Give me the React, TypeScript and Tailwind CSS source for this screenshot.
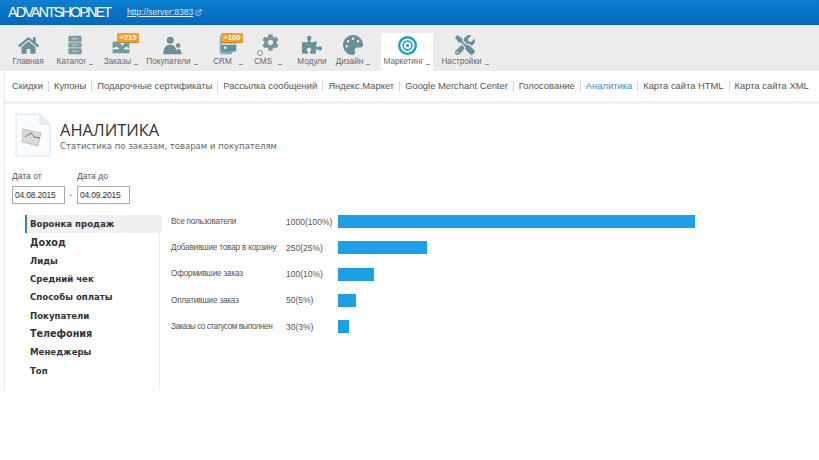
import React from 'react';
import { ExternalLink } from 'lucide-react';
import { FaCog, FaHome, FaPalette, FaPuzzlePiece, FaTools } from 'react-icons/fa';

const Caret = ({ gap = 'ml-[3px]' }: { gap?: string }) => (
  <span className={`inline-block ${gap} w-[4px] h-[1.5px] bg-[#8a9499] align-[-1px]`} />
);

const CatalogIcon = () => (
  <svg viewBox="0 0 24 24" className="w-[20px] h-[22px]">
    <rect x="4" y="1" width="16" height="7" rx="1.500" fill="#7c9a9f" />
    <rect x="4" y="9" width="16" height="6" rx="1" fill="#7c9a9f" />
    <rect x="4" y="16" width="16" height="7" rx="1.500" fill="#7c9a9f" />
    <path stroke="#dfe5e6" d="M8 4.500h8M8 12h8M8 19.500h8" />
  </svg>
);
const OrdersIcon = () => (
  <svg viewBox="0 0 24 24" className="w-[24px] h-[20px]">
    <path fill="#6f9ca3" d="M2 8h7l5 5 3-5h5v14H2z" />
    <path fill="#f3f4f4" d="M2 16l5-2 3 3h5l3-3 4 2v1H2z" />
    <path fill="#4f8087" d="M6 8l6-5 2 2-5 4z" />
  </svg>
);
const CustomersIcon = () => (
  <svg viewBox="0 0 24 24" className="w-[22px] h-[21px]">
    <circle cx="10" cy="6" r="4" fill="#6f8f98" />
    <path fill="#6f8f98" d="M2 22c0-8 3-11 8-11s7 3 7 11z" />
    <circle cx="19" cy="12" r="2.500" fill="#6f8f98" />
    <path fill="#6f8f98" d="M16 22c0-4 1-6 3-6s4 2 4 6z" />
  </svg>
);
const CrmIcon = () => (
  <svg viewBox="0 0 24 24" className="w-[22px] h-[22px]">
    <rect x="3" y="2" width="14" height="20" rx="2" fill="#7fb0b5" />
    <rect x="5" y="8" width="16" height="11" rx="1" fill="#5d949b" />
    <path stroke="#e8eeee" strokeWidth="1.500" d="M5 11h16" />
    <circle cx="9" cy="15" r="1.500" fill="#e8eeee" />
  </svg>
);
const CmsIcon = () => (
  <div className="relative w-[22px] h-[22px]">
    <FaCog className="absolute right-0 top-0 w-[17px] h-[17px] text-[#76959c]" />
    <span className="absolute left-0 bottom-0 w-[6px] h-[6px] rounded-full border border-[#76959c]" />
  </div>
);
const TargetIcon = () => (
  <svg viewBox="0 0 24 24" className="w-[19px] h-[19px]">
    <circle cx="12" cy="12" r="10.500" fill="none" stroke="#1ba0c4" strokeWidth="3" />
    <circle cx="12" cy="12" r="5.500" fill="none" stroke="#1ba0c4" strokeWidth="2" />
    <circle cx="12" cy="12" r="2" fill="#1ba0c4" />
  </svg>
);

const iconClass = 'text-[#67919b]';

const navItems = [
  { label: 'Главная', icon: <FaHome className={`${iconClass} w-[21px] h-[21px]`} />, w: 'w-[44px]' },
  { label: 'Каталог', icon: <CatalogIcon />, caret: true, w: 'w-[50px]' },
  { label: 'Заказы', icon: <OrdersIcon />, caret: true, badge: '+215', badgeLeft: 'left-[17px]', w: 'w-[42px]' },
  { label: 'Покупатели', icon: <CustomersIcon />, caret: true, w: 'w-[60px]' },
  { label: 'CRM', icon: <CrmIcon />, caret: true, gap: 'ml-[7px]', badge: '+100', badgeLeft: 'left-[19px]', w: 'w-[52px]' },
  { label: 'CMS', icon: <CmsIcon />, caret: true, gap: 'ml-[6px]', w: 'w-[28px]' },
  { label: 'Модули', icon: <FaPuzzlePiece className={`${iconClass} w-[20px] h-[20px]`} />, w: 'w-[60px]' },
  { label: 'Дизайн', icon: <FaPalette className={`${iconClass} w-[20px] h-[20px]`} />, caret: true, w: 'w-[22px]' },
];

const subItems = ['Скидки', 'Купоны', 'Подарочные сертификаты', 'Рассылка сообщений', 'Яндекс.Маркет', 'Google Merchant Center', 'Голосование', 'Аналитика', 'Карта сайта HTML', 'Карта сайта XML'];

const sideItems = [
  { label: 'Воронка продаж' },
  { label: 'Доход', large: true },
  { label: 'Лиды' },
  { label: 'Средний чек' },
  { label: 'Способы оплаты' },
  { label: 'Покупатели' },
  { label: 'Телефония', large: true },
  { label: 'Менеджеры' },
  { label: 'Топ' },
];

const funnel = [
  { label: 'Все пользователи', value: '1000(100%)', width: 357 },
  { label: 'Добавившие товар в корзину', value: '250(25%)', width: 89 },
  { label: 'Оформившие заказ', value: '100(10%)', width: 36 },
  { label: 'Оплатившие заказ', value: '50(5%)', width: 18 },
  { label: 'Заказы со статусом выполнен', value: '30(3%)', width: 11, tight: true },
];

export default function App() {
  return (
    <div className="w-[819px] h-[460px] bg-white overflow-hidden text-[#444] font-['Liberation_Sans',Arial,sans-serif]">
      <div className="h-[25px] flex items-center pl-[8px] bg-gradient-to-b from-[#0a7fd0] to-[#0668bd]">
        <span className="text-white text-[14.5px] tracking-[-2px] w-[119px] whitespace-nowrap">ADVANTSHOP.NET</span>
        <a className="text-[#dcecf9] text-[8.5px] underline w-[56px] whitespace-nowrap">http://server:8383</a>
        <ExternalLink className="ml-[12px] w-[7px] h-[7px] text-white" />
      </div>

      <div className="h-[46px] bg-[#ececec] flex items-start pl-[6px] pt-[7px] border-t border-[#dfe3e5]">
        {navItems.map(item => (
          <div key={item.label} className={`${item.w} shrink-0 flex flex-col items-center relative`}>
            <div className="h-[24px] flex items-center">{item.icon}</div>
            {item.badge && (
              <span className={`absolute top-0 ${item.badgeLeft} w-[22px] h-[10px] rounded-[1px] bg-[#f0a030] border-b border-[#c9851f] text-white text-[7.5px] font-bold leading-[9px] text-center`}>{item.badge}</span>
            )}
            <span className="mt-[-2px] text-[8.2px] leading-[14px] text-[#666] whitespace-nowrap">
              {item.label}
              {item.caret && <Caret gap={item.gap} />}
            </span>
          </div>
        ))}
        <div className="w-[52px] h-[38px] ml-[17px] bg-white rounded-t-[2px] flex flex-col items-center shrink-0">
          <div className="h-[24px] flex items-center"><TargetIcon /></div>
          <span className="mt-[-2px] text-[8.2px] leading-[14px] text-[#666] whitespace-nowrap">Маркетинг<Caret /></span>
        </div>
        <div className="w-[60px] ml-[2px] flex flex-col items-center shrink-0">
          <div className="h-[24px] flex items-center"><FaTools className={`${iconClass} w-[20px] h-[20px]`} /></div>
          <span className="mt-[-2px] text-[8.2px] leading-[14px] text-[#666] whitespace-nowrap">Настройки<Caret /></span>
        </div>
      </div>

      <div className="flex ml-[4px] border-l border-[#e6e8e8] h-[319px]">
        <div className="flex-1 min-w-0">
          <div className="h-[33px] flex items-center pl-[7px] pt-[1px] border-b-[3px] border-[#f0f0f0] whitespace-nowrap text-[9.4px] text-[#555]">
            {subItems.map((s, i) => (
              <React.Fragment key={s}>
                {i > 0 && <span className="w-px h-[11px] bg-[#d4d8da] mx-[5px]" />}
                <span className={s === 'Аналитика' ? 'text-[#3b8ec4]' : ''}>{s}</span>
              </React.Fragment>
            ))}
          </div>

          <div className="flex items-start pt-[8px] pl-[10px]">
            <svg viewBox="0 0 36 44" className="w-[36px] h-[46px] shrink-0">
              <path d="M1 1h24l10 10v32H1z" fill="#fafcfd" stroke="#cfe3ee" />
              <path d="M25 1v10h10" fill="#e6f1f6" stroke="#cfe3ee" />
              <path d="M8 16l18 4-3 13-16-4z" fill="#d9d9d9" stroke="#aaa" strokeWidth=".6" />
              <path d="M10 24l6-4 3 4 6 1" fill="none" stroke="#777" />
            </svg>
            <div className="ml-[9px] pt-[8px]">
              <div className="text-[16.5px] leading-[20px] text-[#333] font-['Open_Sans',sans-serif]">АНАЛИТИКА</div>
              <div className="text-[8.5px] leading-[13px] text-[#666] font-['DejaVu_Sans',sans-serif]">Статистика по заказам, товарам и покупателям</div>
            </div>
          </div>

          <div className="flex items-end pl-[7px] mt-[12px]">
            <div className="w-[53px]">
              <div className="text-[8.5px] leading-[12px] mb-[4px] text-[#555]">Дата от</div>
              <div className="w-[53px] h-[18px] border border-[#aaa] pl-[2px] text-[8.5px] tracking-[-0.2px] leading-[16px] text-[#333]">04.08.2015</div>
            </div>
            <span className="w-[12px] text-center text-[9px] leading-[18px] text-[#666]">-</span>
            <div className="w-[53px]">
              <div className="text-[8.5px] leading-[12px] mb-[4px] text-[#555]">Дата до</div>
              <div className="w-[53px] h-[18px] border border-[#aaa] pl-[2px] text-[8.5px] tracking-[-0.2px] leading-[16px] text-[#333]">04.09.2015</div>
            </div>
          </div>

          <div className="flex mt-[11px] pl-[20px]">
            <div className="w-[135px] h-[175px] border-r border-[#ececec] shrink-0">
              {sideItems.map((s, i) => (
                <div key={s.label} className={`h-[18.300px] pl-[3px] pt-[1px] flex items-center font-bold text-[#333] font-['DejaVu_Sans',sans-serif] whitespace-nowrap ${s.large ? 'text-[9.600px]' : 'text-[8.600px]'} ${i === 0 ? 'w-[137px] bg-[#eef0f1] border-l-2 border-[#3a84a8]' : 'border-l-2 border-transparent'}`}>{s.label}</div>
              ))}
            </div>
            <div className="pl-[11px] flex flex-col gap-[13.250px]">
              {funnel.map(row => (
                <div key={row.label} className="flex items-center h-[13px] text-[#555] whitespace-nowrap">
                  <span className={`w-[115px] pt-[1px] text-[8.2px] ${row.tight ? 'tracking-[-0.5px]' : 'tracking-[-0.2px]'}`}>{row.label}</span>
                  <span className="w-[52px] pt-[1px] text-[8.5px]">{row.value}</span>
                  <div className="h-[13px] bg-[#1b9fe6]" style={{ width: row.width }} />
                </div>
              ))}
            </div>
          </div>
        </div>
      </div>
    </div>
  );
}
